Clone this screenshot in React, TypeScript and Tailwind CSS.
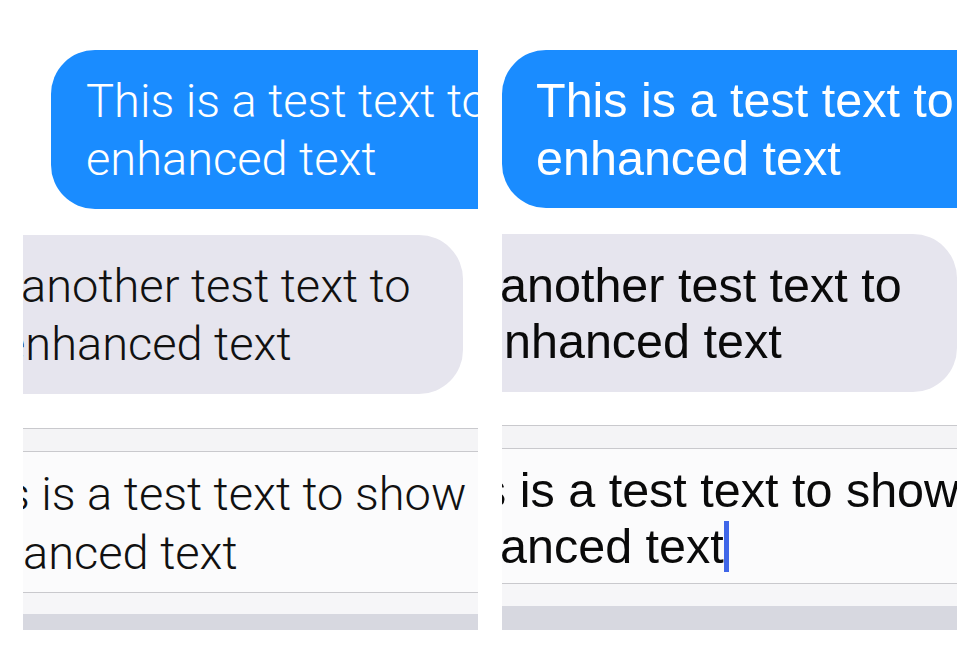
import React from "react";

const thin = { fontFamily: "Roboto, 'Liberation Sans', sans-serif" };
const regular = { fontFamily: "'Liberation Sans', Arial, sans-serif" };

// Left half: light weight rendering
const LightPanel = () => (
  <div className="flex w-[455px] flex-col overflow-hidden pt-[50px] font-light text-[47px]" style={thin}>
    {/* Sent bubble */}
    <div className="ml-[28px] w-[600px] shrink-0 rounded-l-[44px] bg-[#1a8cff] pt-[22px] pb-[21px] pl-[35px] leading-[58px] text-white whitespace-nowrap">
      <div>This is a test text to show</div>
      <div>enhanced text</div>
    </div>

    {/* Received bubble */}
    <div className="mt-[26px] w-[440px] shrink-0 rounded-r-[44px] bg-[#e6e5ee] pt-[22px] pb-[21px] leading-[58px] text-[#111] whitespace-nowrap">
      <div className="-ml-[2px]">another test text to</div>
      <div className="-ml-[22px]">enhanced text</div>
    </div>

    {/* Input field */}
    <div className="mt-[34px] h-[23px] border-t border-[#c9c9cd] bg-[#f4f4f6]" />
    <div className="h-[141px] border-t border-[#c9c9cd] bg-[#fbfbfc] pt-[12px] leading-[59px] text-[#111] whitespace-nowrap">
      <div className="-ml-[17px]">s is a test text to show</div>
      <div>anced text</div>
    </div>
    <div className="h-[22px] border-t border-[#c9c9cd] bg-[#f6f6f8]" />
    <div className="h-[16px] bg-[#d7d8e0]" />
  </div>
);

// Right half: regular weight rendering
const RegularPanel = () => (
  <div className="flex w-[455px] flex-col overflow-hidden pt-[50px] text-[48.5px]" style={regular}>
    <div className="w-[600px] shrink-0 rounded-l-[44px] bg-[#1a8cff] pt-[21px] pb-[21px] pl-[34px] leading-[58px] text-white whitespace-nowrap">
      <div>This is a test text to show</div>
      <div>enhanced text</div>
    </div>

    <div className="mt-[26px] w-[455px] shrink-0 rounded-r-[44px] bg-[#e6e5ee] pt-[23px] pb-[23px] leading-[56px] text-[#0a0a0a] whitespace-nowrap">
      <div className="-ml-[2px]">another test text to</div>
      <div className="-ml-[25px]">enhanced text</div>
    </div>

    <div className="mt-[33px] h-[23px] border-t border-[#c9c9cd] bg-[#f4f4f6]" />
    <div className="h-[135px] border-t border-[#c9c9cd] bg-[#fbfbfc] pt-[13px] leading-[56px] text-[#0a0a0a] whitespace-nowrap">
      <div className="-ml-[20px]">s is a test text to show</div>
      <div className="-ml-[2px]">
        anced text
        <span className="inline-block h-[51px] w-[5px] bg-[#3f66e8] align-[-9px]" />
      </div>
    </div>
    <div className="h-[23px] border-t border-[#c9c9cd] bg-[#f6f6f8]" />
    <div className="h-[24px] bg-[#d7d8e0]" />
  </div>
);

export default function App() {
  return (
    <div className="flex h-[653px] w-[980px] gap-[24px] bg-white pl-[23px]">
      <LightPanel />
      <RegularPanel />
    </div>
  );
}
